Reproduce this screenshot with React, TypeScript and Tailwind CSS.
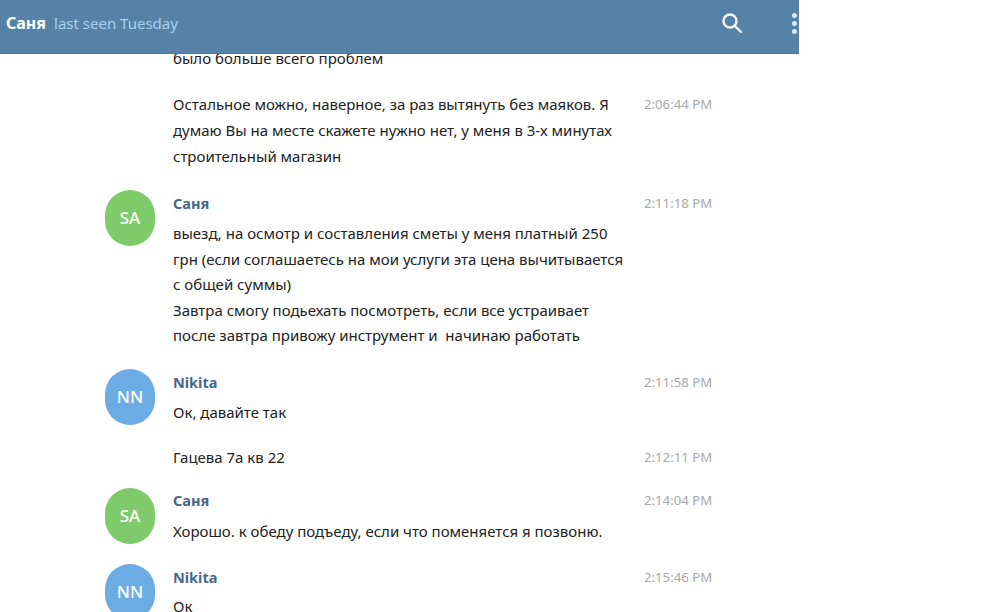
import React from 'react';

type Msg = {
  author?: string;
  initials?: string;
  color?: string;
  time: string;
  lines: string[];
  gap: string;
  nameGap?: string;
  line?: string;
  avatarGap?: string;
};

const messages: Msg[] = [
  { time: '2:06:44 PM', gap: 'mt-[20px]', lines: ['Остальное можно, наверное, за раз вытянуть без маяков. Я', 'думаю Вы на месте скажете нужно нет, у меня в 3-х минутах', 'строительный магазин'] },
  { author: 'Саня', initials: 'SA', color: 'bg-[#7fcb6b]', time: '2:11:18 PM', gap: 'mt-[21px]', nameGap: 'mb-[5px]', line: 'h-[25.5px] leading-[25.5px]', lines: ['выезд, на осмотр и составления сметы у меня платный 250', 'грн (если соглашаетесь на мои услуги эта цена вычитывается', 'с общей суммы)', 'Завтра смогу подьехать посмотреть, если все устраивает', 'после завтра привожу инструмент и  начинаю работать'] },
  { author: 'Nikita', initials: 'NN', color: 'bg-[#6cace4]', time: '2:11:58 PM', gap: 'mt-[20px]', nameGap: 'mb-[4px]', lines: ['Ок, давайте так'] },
  { time: '2:12:11 PM', gap: 'mt-[19px]', lines: ['Гацева 7а кв 22'] },
  { author: 'Саня', initials: 'SA', color: 'bg-[#7fcb6b]', time: '2:14:04 PM', gap: 'mt-[17px]', nameGap: 'mb-[5px]', avatarGap: 'mt-[1px]', lines: ['Хорошо. к обеду подъеду, если что поменяется я позвоню.'] },
  { author: 'Nikita', initials: 'NN', color: 'bg-[#6cace4]', time: '2:15:46 PM', gap: 'mt-[20px]', nameGap: 'mb-[3px]', lines: ['Ок'] },
];

function Row({ m }: { m: Msg }) {
  return (
    <div className={`flex ${m.gap}`}>
      <div className="w-[68px] shrink-0">
        {m.initials && (
          <div className={`w-[50px] h-[56px] rounded-full flex items-center justify-center text-white text-[17px] font-medium ${m.color} ${m.avatarGap ?? ''}`}>
            {m.initials}
          </div>
        )}
      </div>
      <div className="w-[471px] shrink-0">
        {m.author && (
          <div className={`h-[26px] text-[14.5px] font-bold leading-[26px] text-[#46688a] ${m.nameGap}`}>{m.author}</div>
        )}
        {m.lines.map((l, i) => (
          <div key={i} className={`text-[15px] text-[#222] whitespace-pre ${m.line ?? 'h-[26px] leading-[26px]'}`}>{l}</div>
        ))}
      </div>
      <div className="text-[13.2px] leading-[26px] text-[#a8a8a8]">{m.time}</div>
    </div>
  );
}

export default function App() {
  return (
    <div className="h-[612px] w-[1000px] overflow-hidden bg-white font-['Noto_Sans','Liberation_Sans',sans-serif]">
      <header className="relative z-10 h-[54px] w-[799px] bg-[#5682a8] flex items-center pb-[7px] border-b border-[#4d7696]">
        <span className="ml-[6px] text-[16px] font-bold text-white">Саня</span>
        <span className="ml-[8px] text-[15px] text-[#a9d0f0]">last seen Tuesday</span>
        <svg className="ml-auto mr-[49px]" width="22" height="22" viewBox="0 0 22 22" fill="none" stroke="#f4f8fb" strokeWidth="2.4" strokeLinecap="round">
          <circle cx="9" cy="9" r="6.5" />
          <path d="M14 14l6 6" />
        </svg>
        <div className="flex flex-col gap-[3px] mr-[2px]">
          <span className="w-[5px] h-[5px] rounded-full bg-[#d5ebfa]" />
          <span className="w-[5px] h-[5px] rounded-full bg-[#d5ebfa]" />
          <span className="w-[5px] h-[5px] rounded-full bg-[#d5ebfa]" />
        </div>
      </header>
      <main className="pl-[105px] -mt-[9px]">
        <div className="pl-[68px] h-[26px] leading-[26px] text-[15px] text-[#222]">было больше всего проблем</div>
        {messages.map((m) => (
          <Row key={m.time} m={m} />
        ))}
      </main>
    </div>
  );
}
